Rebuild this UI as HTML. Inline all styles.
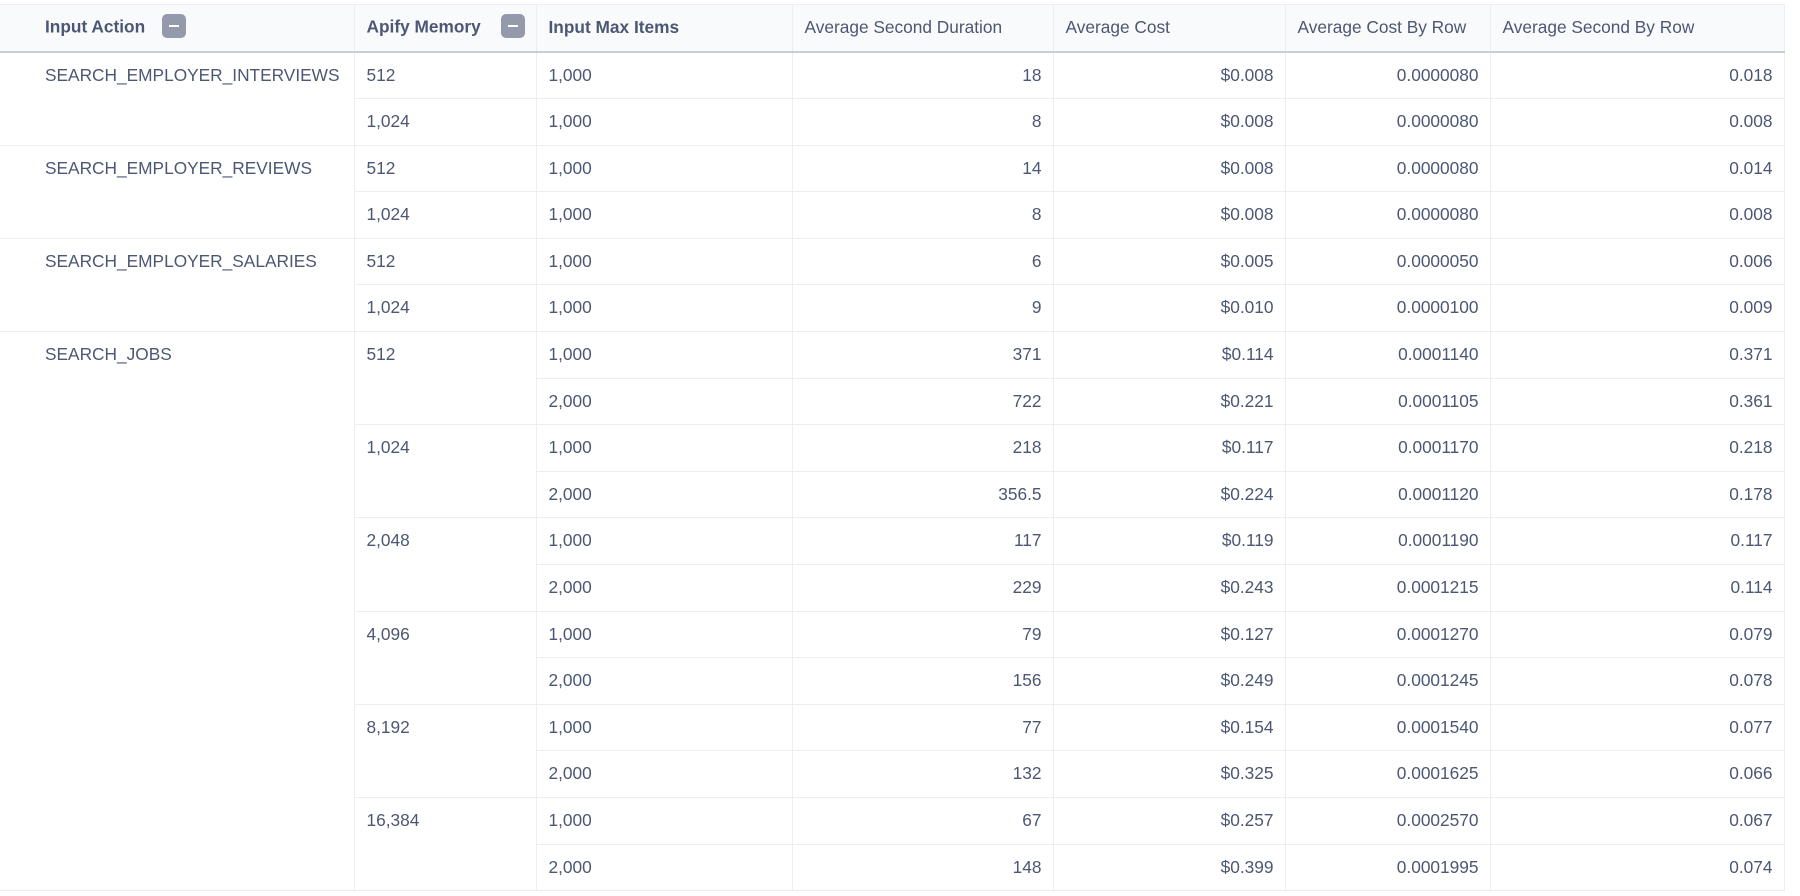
<!DOCTYPE html>
<html><head><meta charset="utf-8"><style>
body{margin:0;background:#fff;width:1800px;height:896px;overflow:hidden;font-family:"Liberation Sans",sans-serif;color:#4c5773;}
table{position:absolute;left:0;top:4px;border-collapse:collapse;table-layout:fixed;width:1784px;font-size:17.3px;}
td,th{padding:0 12px;border:1px solid #eceef1;white-space:nowrap;vertical-align:top;line-height:45.6px;box-sizing:border-box;}
th{background:#f9fafb;font-weight:normal;text-align:left;border-bottom:2px solid #c9ced6;height:47px;vertical-align:middle;line-height:normal;}
th.b{font-weight:bold;}
td.r{text-align:right;padding-right:11px;}
td.a{padding-left:45px;border-left:none;}
th.a{padding-left:45px;border-left:none;}
.m{display:inline-block;width:24px;height:24px;background:#949aab;border-radius:5px;vertical-align:middle;position:relative;top:-2px}
.m:after{content:"";position:absolute;left:7px;top:11px;width:10px;height:2px;background:#fff}
</style></head><body>
<table>
<colgroup><col style="width:354px"><col style="width:182px"><col style="width:256px"><col style="width:261px"><col style="width:232px"><col style="width:205px"><col style="width:294px"></colgroup>
<tr><th class="b a">Input Action<span class="m" style="margin-left:17px"></span></th><th class="b">Apify Memory<span class="m" style="margin-left:20px"></span></th><th class="b">Input Max Items</th><th>Average Second Duration</th><th>Average Cost</th><th>Average Cost By Row</th><th>Average Second By Row</th></tr>
<tr><td class="a" rowspan="2">SEARCH_EMPLOYER_INTERVIEWS</td><td>512</td><td>1,000</td><td class="r">18</td><td class="r">$0.008</td><td class="r">0.0000080</td><td class="r">0.018</td></tr>
<tr><td>1,024</td><td>1,000</td><td class="r">8</td><td class="r">$0.008</td><td class="r">0.0000080</td><td class="r">0.008</td></tr>
<tr><td class="a" rowspan="2">SEARCH_EMPLOYER_REVIEWS</td><td>512</td><td>1,000</td><td class="r">14</td><td class="r">$0.008</td><td class="r">0.0000080</td><td class="r">0.014</td></tr>
<tr><td>1,024</td><td>1,000</td><td class="r">8</td><td class="r">$0.008</td><td class="r">0.0000080</td><td class="r">0.008</td></tr>
<tr><td class="a" rowspan="2">SEARCH_EMPLOYER_SALARIES</td><td>512</td><td>1,000</td><td class="r">6</td><td class="r">$0.005</td><td class="r">0.0000050</td><td class="r">0.006</td></tr>
<tr><td>1,024</td><td>1,000</td><td class="r">9</td><td class="r">$0.010</td><td class="r">0.0000100</td><td class="r">0.009</td></tr>
<tr><td class="a" rowspan="12">SEARCH_JOBS</td><td rowspan="2">512</td><td>1,000</td><td class="r">371</td><td class="r">$0.114</td><td class="r">0.0001140</td><td class="r">0.371</td></tr>
<tr><td>2,000</td><td class="r">722</td><td class="r">$0.221</td><td class="r">0.0001105</td><td class="r">0.361</td></tr>
<tr><td rowspan="2">1,024</td><td>1,000</td><td class="r">218</td><td class="r">$0.117</td><td class="r">0.0001170</td><td class="r">0.218</td></tr>
<tr><td>2,000</td><td class="r">356.5</td><td class="r">$0.224</td><td class="r">0.0001120</td><td class="r">0.178</td></tr>
<tr><td rowspan="2">2,048</td><td>1,000</td><td class="r">117</td><td class="r">$0.119</td><td class="r">0.0001190</td><td class="r">0.117</td></tr>
<tr><td>2,000</td><td class="r">229</td><td class="r">$0.243</td><td class="r">0.0001215</td><td class="r">0.114</td></tr>
<tr><td rowspan="2">4,096</td><td>1,000</td><td class="r">79</td><td class="r">$0.127</td><td class="r">0.0001270</td><td class="r">0.079</td></tr>
<tr><td>2,000</td><td class="r">156</td><td class="r">$0.249</td><td class="r">0.0001245</td><td class="r">0.078</td></tr>
<tr><td rowspan="2">8,192</td><td>1,000</td><td class="r">77</td><td class="r">$0.154</td><td class="r">0.0001540</td><td class="r">0.077</td></tr>
<tr><td>2,000</td><td class="r">132</td><td class="r">$0.325</td><td class="r">0.0001625</td><td class="r">0.066</td></tr>
<tr><td rowspan="2">16,384</td><td>1,000</td><td class="r">67</td><td class="r">$0.257</td><td class="r">0.0002570</td><td class="r">0.067</td></tr>
<tr><td>2,000</td><td class="r">148</td><td class="r">$0.399</td><td class="r">0.0001995</td><td class="r">0.074</td></tr>
</table>
</body></html>
